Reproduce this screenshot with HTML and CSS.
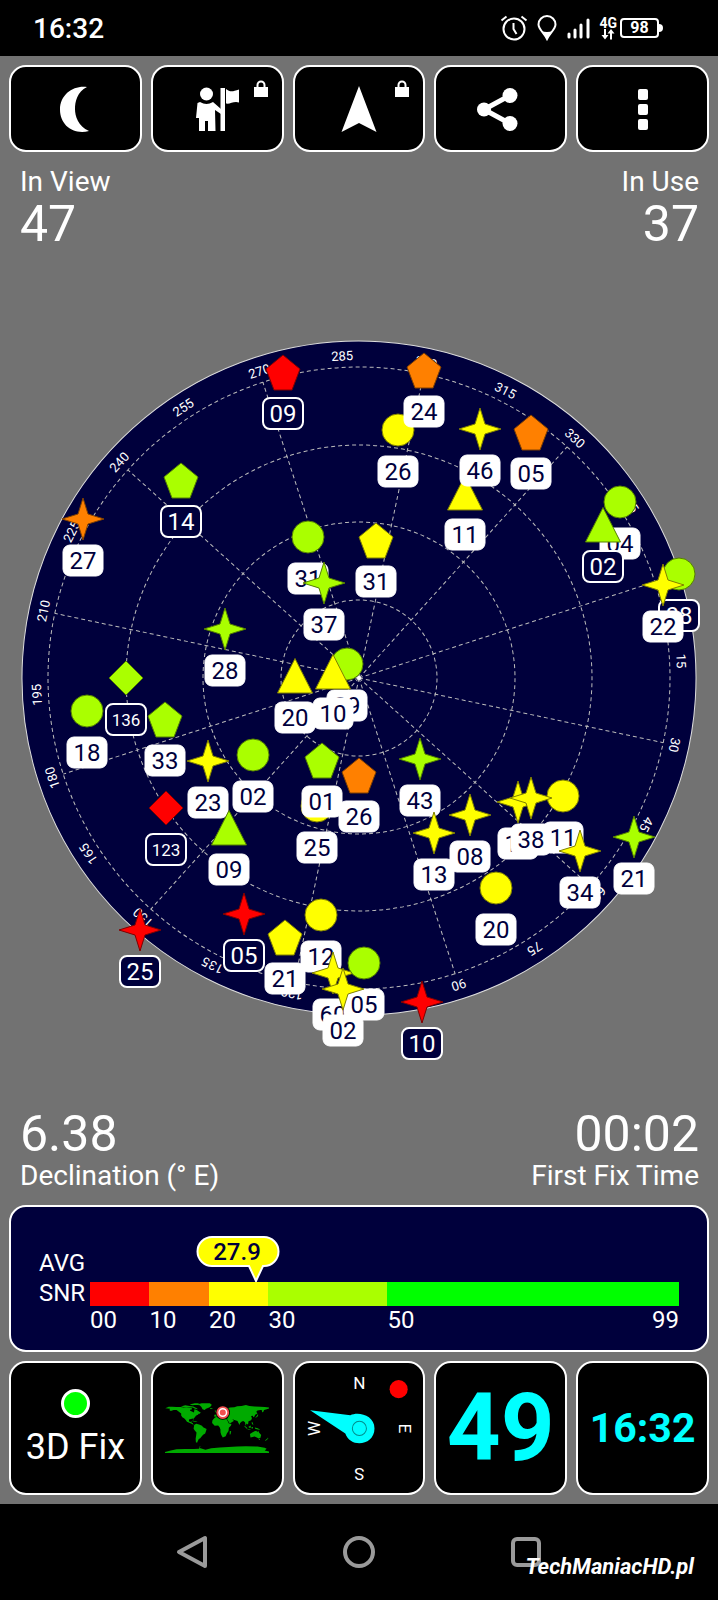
FILE: index.html
```html
<!DOCTYPE html>
<html lang="en">
<head>
  <meta charset="UTF-8" />
  <meta name="viewport" content="width=device-width, initial-scale=1.0" />
  <title>GPS Status</title>
  <link rel="stylesheet" href="styles.css">
</head>
<body>
  <header class="status-bar">
    <span class="clock">16:32</span>
    <div class="status-icons">
      <svg width="28" height="26" viewBox="0 0 28 26" class="line">
        <circle cx="14" cy="14" r="10.5"/>
        <path d="M13.5 8v6l3 5M1.5 5.5l5-4M26.5 5.5l-5-4"/>
      </svg>
      <svg width="20" height="26" viewBox="0 0 20 26">
        <path class="line" d="M10 24C7 18 1.500 14 1.500 9.500a8.500 8.500 0 0 1 17 0C18.500 14 13 18 10 24z"/>
        <path class="solid" d="M4 15.500q6 3 12 0L10 24.500z"/>
      </svg>
      <svg width="24" height="22" viewBox="0 0 24 22" class="signal">
        <path d="M3 17v3M9 13v7M15 8v12M22 3v17"/>
      </svg>
      <div class="network">
        <span>4G</span>
        <svg width="14" height="11" viewBox="0 0 14 11">
          <path class="solid" d="M3 0h2v6h2.500L4 10.500.5 6H3zM9 10.500h2v-6h2.500L10 0 6.500 4.500H9z"/>
        </svg>
      </div>
      <div class="battery">98</div>
    </div>
  </header>

  <main class="app">
    <div class="toolbar">
      <button class="tile" aria-label="Night mode">
        <svg width="48" height="48" viewBox="0 0 48 48" class="solid">
          <path d="M36 2C26 7 24 17 24 24s3 17 14 22C22 50 9 40 9 24.500S23 0 36 2z"/>
        </svg>
      </button>
      <button class="tile" aria-label="Waypoints">
        <svg width="48" height="48" viewBox="0 0 48 48" class="solid">
          <circle cx="13.500" cy="9" r="6.500"/>
          <path d="M7 17q6.500 4 13 0l8 7v5l-6-4 .5 21H15V36h-3v10H6V33H3l1.500-15z"/>
          <path d="M27.500 3H32v43h-4.500zM33 4c4 3 6 3 13 .5v13c-5-2-9 2-13 1z"/>
        </svg>
        <svg width="16" height="18" viewBox="0 0 16 18" class="lock">
          <path class="solid" d="M1 7h14v10H1z"/>
          <path class="line" d="M4.500 8V5a3.500 3.500 0 0 1 7 0v3"/>
        </svg>
      </button>
      <button class="tile" aria-label="Navigate">
        <svg width="48" height="48" viewBox="0 0 48 48" class="solid">
          <path d="M24 1l17.500 46L24 38 6.500 47z"/>
        </svg>
        <svg width="16" height="18" viewBox="0 0 16 18" class="lock">
          <path class="solid" d="M1 7h14v10H1z"/>
          <path class="line" d="M4.500 8V5a3.500 3.500 0 0 1 7 0v3"/>
        </svg>
      </button>
      <button class="tile" aria-label="Share">
        <svg width="48" height="48" viewBox="0 0 48 48" class="solid">
          <path class="share-line" d="M33 10.500L7 24.500l26 14"/>
          <circle cx="7" cy="24.500" r="7"/>
          <circle cx="33" cy="10.500" r="7.500"/>
          <circle cx="33" cy="38.500" r="7.500"/>
        </svg>
      </button>
      <button class="tile" aria-label="More">
        <svg width="48" height="48" viewBox="0 0 48 48" class="solid">
          <rect x="19" y="4" width="10" height="11" rx="2"/>
          <rect x="19" y="19" width="10" height="11" rx="2"/>
          <rect x="19" y="34" width="10" height="11" rx="2"/>
        </svg>
      </button>
    </div>

    <div class="readouts top">
      <div class="readout"><span class="label">In View</span><span class="value">47</span></div>
      <div class="readout right"><span class="label">In Use</span><span class="value">37</span></div>
    </div>

    <svg class="radar" viewBox="0 250 718 857">
      <defs>
        <circle id="circle" r="16"/>
        <path id="pentagon" d="M0-17L17-3 9 18H-9L-17-3z"/>
        <path id="star" d="M0-21L5-5 21 0 5 5 0 21-5 5-21 0-5-5z"/>
        <path id="triangle" d="M0-17.500L17.500 17h-35z"/>
        <path id="diamond" d="M0-17L17 0 0 17-17 0z"/>
        <rect id="tag" x="-20" y="26" width="40" height="31" rx="7"/>
      </defs>

      <!-- sky plot, rotated to the current heading -->
      <g transform="translate(359 678) rotate(72)">
        <circle class="sky" r="337"/>
        <g class="grid">
          <circle r="78"/>
          <circle r="156"/>
          <circle r="233"/>
          <circle r="311"/>
          <path d="M0 0V-311"/>
          <path d="M0 0V-311" transform="rotate(30)"/>
          <path d="M0 0V-311" transform="rotate(60)"/>
          <path d="M0 0V-311" transform="rotate(90)"/>
          <path d="M0 0V-311" transform="rotate(120)"/>
          <path d="M0 0V-311" transform="rotate(150)"/>
          <path d="M0 0V-311" transform="rotate(180)"/>
          <path d="M0 0V-311" transform="rotate(210)"/>
          <path d="M0 0V-311" transform="rotate(240)"/>
          <path d="M0 0V-311" transform="rotate(270)"/>
          <path d="M0 0V-311" transform="rotate(300)"/>
          <path d="M0 0V-311" transform="rotate(330)"/>
        </g>
        <g class="degrees">
          <text y="-318">0</text>
          <text y="-318" transform="rotate(15)">15</text>
          <text y="-318" transform="rotate(30)">30</text>
          <text y="-318" transform="rotate(45)">45</text>
          <text y="-318" transform="rotate(60)">60</text>
          <text y="-318" transform="rotate(75)">75</text>
          <text y="-318" transform="rotate(90)">90</text>
          <text y="-318" transform="rotate(120)">120</text>
          <text y="-318" transform="rotate(135)">135</text>
          <text y="-318" transform="rotate(150)">150</text>
          <text y="-318" transform="rotate(165)">165</text>
          <text y="-318" transform="rotate(180)">180</text>
          <text y="-318" transform="rotate(195)">195</text>
          <text y="-318" transform="rotate(210)">210</text>
          <text y="-318" transform="rotate(225)">225</text>
          <text y="-318" transform="rotate(240)">240</text>
          <text y="-318" transform="rotate(255)">255</text>
          <text y="-318" transform="rotate(270)">270</text>
          <text y="-318" transform="rotate(285)">285</text>
          <text y="-318" transform="rotate(300)">300</text>
          <text y="-318" transform="rotate(315)">315</text>
          <text y="-318" transform="rotate(330)">330</text>
          <text y="-318" transform="rotate(345)">345</text>
        </g>
        <circle class="zenith" r="2"/>
      </g>

      <!-- satellites; "unused" ones get an outlined tag -->
      <g class="sat" transform="translate(398 430)"><use href="#circle" class="fair"/><use href="#tag"/><text y="50">26</text></g>
      <g class="sat" transform="translate(308 537)"><use href="#circle" class="good"/><use href="#tag"/><text y="50">31</text></g>
      <g class="sat" transform="translate(620 502)"><use href="#circle" class="good"/><use href="#tag"/><text y="50">04</text></g>
      <g class="sat unused" transform="translate(679 574)"><use href="#circle" class="good"/><use href="#tag"/><text y="50">08</text></g>
      <g class="sat" transform="translate(347 664)"><use href="#circle" class="good"/><use href="#tag"/><text y="50">29</text></g>
      <g class="sat" transform="translate(87 711)"><use href="#circle" class="good"/><use href="#tag"/><text y="50">18</text></g>
      <g class="sat" transform="translate(253 755)"><use href="#circle" class="good"/><use href="#tag"/><text y="50">02</text></g>
      <g class="sat" transform="translate(317 806)"><use href="#circle" class="fair"/><use href="#tag"/><text y="50">25</text></g>
      <g class="sat" transform="translate(321 915)"><use href="#circle" class="fair"/><use href="#tag"/><text y="50">12</text></g>
      <g class="sat" transform="translate(496 888)"><use href="#circle" class="fair"/><use href="#tag"/><text y="50">20</text></g>
      <g class="sat" transform="translate(563 796)"><use href="#circle" class="fair"/><use href="#tag"/><text y="50">11</text></g>

      <g class="sat" transform="translate(465 493)"><use href="#triangle" class="fair"/><use href="#tag"/><text y="50">11</text></g>
      <g class="sat unused" transform="translate(603 525)"><use href="#triangle" class="good"/><use href="#tag"/><text y="50">02</text></g>
      <g class="sat" transform="translate(295 676)"><use href="#triangle" class="fair"/><use href="#tag"/><text y="50">20</text></g>
      <g class="sat" transform="translate(333 672)"><use href="#triangle" class="fair"/><use href="#tag"/><text y="50">10</text></g>

      <g class="sat unused" transform="translate(283 372)"><use href="#pentagon" class="bad"/><use href="#tag"/><text y="50">09</text></g>
      <g class="sat" transform="translate(424 370)"><use href="#pentagon" class="weak"/><use href="#tag"/><text y="50">24</text></g>
      <g class="sat" transform="translate(531 432)"><use href="#pentagon" class="weak"/><use href="#tag"/><text y="50">05</text></g>
      <g class="sat unused" transform="translate(181 480)"><use href="#pentagon" class="good"/><use href="#tag"/><text y="50">14</text></g>
      <g class="sat" transform="translate(376 540)"><use href="#pentagon" class="fair"/><use href="#tag"/><text y="50">31</text></g>
      <g class="sat" transform="translate(165 719)"><use href="#pentagon" class="good"/><use href="#tag"/><text y="50">33</text></g>
      <g class="sat" transform="translate(322 760)"><use href="#pentagon" class="good"/><use href="#tag"/><text y="50">01</text></g>
      <g class="sat" transform="translate(359 775)"><use href="#pentagon" class="weak"/><use href="#tag"/><text y="50">26</text></g>
      <g class="sat" transform="translate(285 937)"><use href="#pentagon" class="fair"/><use href="#tag"/><text y="50">21</text></g>

      <g class="sat unused long" transform="translate(126 678)"><use href="#diamond" class="good"/><use href="#tag"/><text y="48">136</text></g>
      <g class="sat unused long" transform="translate(166 808)"><use href="#diamond" class="bad"/><use href="#tag"/><text y="48">123</text></g>

      <g class="sat" transform="translate(83 519)"><use href="#star" class="weak"/><use href="#tag"/><text y="50">27</text></g>
      <g class="sat" transform="translate(480 429)"><use href="#star" class="fair"/><use href="#tag"/><text y="50">46</text></g>
      <g class="sat" transform="translate(324 583)"><use href="#star" class="good"/><use href="#tag"/><text y="50">37</text></g>
      <g class="sat" transform="translate(225 629)"><use href="#star" class="good"/><use href="#tag"/><text y="50">28</text></g>
      <g class="sat" transform="translate(663 585)"><use href="#star" class="fair"/><use href="#tag"/><text y="50">22</text></g>
      <g class="sat" transform="translate(208 761)"><use href="#star" class="fair"/><use href="#tag"/><text y="50">23</text></g>
      <g class="sat" transform="translate(229 828)"><use href="#triangle" class="good"/><use href="#tag"/><text y="50">09</text></g>
      <g class="sat" transform="translate(420 759)"><use href="#star" class="good"/><use href="#tag"/><text y="50">43</text></g>
      <g class="sat" transform="translate(434 833)"><use href="#star" class="fair"/><use href="#tag"/><text y="50">13</text></g>
      <g class="sat" transform="translate(470 815)"><use href="#star" class="fair"/><use href="#tag"/><text y="50">08</text></g>
      <g class="sat" transform="translate(518 802)"><use href="#star" class="fair"/><use href="#tag"/><text y="50">12</text></g>
      <g class="sat" transform="translate(531 798)"><use href="#star" class="fair"/><use href="#tag"/><text y="50">38</text></g>
      <g class="sat" transform="translate(580 851)"><use href="#star" class="fair"/><use href="#tag"/><text y="50">34</text></g>
      <g class="sat" transform="translate(634 837)"><use href="#star" class="good"/><use href="#tag"/><text y="50">21</text></g>
      <g class="sat unused" transform="translate(140 930)"><use href="#star" class="bad"/><use href="#tag"/><text y="50">25</text></g>
      <g class="sat unused" transform="translate(244 914)"><use href="#star" class="bad"/><use href="#tag"/><text y="50">05</text></g>
      <g class="sat unused" transform="translate(422 1002)"><use href="#star" class="bad"/><use href="#tag"/><text y="50">10</text></g>
      <g class="sat" transform="translate(333 973)"><use href="#star" class="fair"/><use href="#tag"/><text y="50">60</text></g>
      <g class="sat" transform="translate(364 963)"><use href="#circle" class="good"/><use href="#tag"/><text y="50">05</text></g>
      <g class="sat" transform="translate(343 989)"><use href="#star" class="fair"/><use href="#tag"/><text y="50">02</text></g>
    </svg>

    <div class="readouts bottom">
      <div class="readout"><span class="value">6.38</span><span class="label">Declination (° E)</span></div>
      <div class="readout right"><span class="value">00:02</span><span class="label">First Fix Time</span></div>
    </div>

    <section class="snr">
      <div class="snr-label">AVG<br>SNR</div>
      <div class="snr-meter">
        <div class="snr-bar">
          <span class="bad"></span><span class="weak"></span><span class="fair"></span><span class="good"></span><span class="best"></span>
          <svg class="bubble" style="left: 28.2%" width="84" height="48" viewBox="0 0 84 48">
            <path d="M16 3h52a14 14 0 0 1 0 29H67L60 47 53 32H16a14 14 0 0 1 0-29z"/>
            <text x="41" y="26">27.9</text>
          </svg>
        </div>
        <div class="snr-scale">
          <span>00</span><span>10</span><span>20</span><span>30</span><span class="last"><span>50</span><span>99</span></span>
        </div>
      </div>
    </section>

    <div class="widgets">
      <button class="tile fix">
        <span class="fix-dot"></span>
        3D Fix
      </button>
      <button class="tile" aria-label="World map">
        <svg class="map" viewBox="-180 -84 360 174">
          <path d="M-179-66L-167-71-155-71-141-70-127-70-115-68-105-69-93-67-88-67-86-62-93-61-93-57-85-54-80-51-79-56-78-62-72-61-66-57-60-53-56-51-60-47-66-46-64-44-70-42-74-39-76-35-81-31-81-25-84-30-90-29-97-27-97-21-92-18-88-21-88-16-83-14-83-10-78-8-80-7-86-11-92-14-104-19-109-26-114-31-120-35-124-41-124-48-132-54-140-60-150-60-160-56-165-60-162-64z"/>
          <path d="M-125-72L-110-76-95-74-82-72-70-66-66-62-76-64-84-68-95-68-112-69zM-95-79l18-4 16 0-9 5-15 2zM-73-78L-53-83-25-83-18-78-22-72-27-68-38-64-43-60-50-62-54-70-60-76z"/>
          <path d="M-24-66h8v3h-8zM-85-23l10 2 8 2-6 1-12-3z"/>
          <path d="M-79-8L-72-12-62-10-52-5-48 0-36 6-38 13-41 22-48 26-54 33-58 38-63 41-66 47-69 54-73 52-74 40-72 28-71 18-77 11-81 5z"/>
          <path d="M-17-15L-16-23-9-32-2-36 10-37 12-33 20-31 31-31 35-25 41-13 50-11 48-5 41 2 40 13 34 22 30 31 20 35 15 27 12 17 12 8 9 0 4-6-8-5z"/>
          <path d="M44 14l5-1-2 11-3 1z"/>
          <path d="M-10-37L-9-43-1-44 2-49 8-54 12-54 20-55 28-59 22-60 20-63 15-56 11-58 5-60 12-65 20-70 28-71 40-67 45-68 60-69 70-73 85-74 100-77 112-74 130-72 150-71 165-70 180-68 180-65 172-62 163-60 160-53 156-52 156-59 150-60 140-58 136-54 140-48 132-43 129-36 126-35 124-40 118-39 121-31 118-24 109-21 108-12 104-10 100-14 101-4 98-10 97-17 91-22 86-20 80-15 78-8 73-17 71-22 60-25 50-30 56-26 58-22 44-13 35-28 36-36 27-37 23-38 18-41 13-45 16-39 10-44 3-43 0-38-5-36z"/>
          <path d="M-8-58l7 0 2 6-7 1zM140-44l3 1-3 7-8 4 6-8zM120-18l3 1 3 9-5-3zM96-5l10 8-3 2-8-8zM106 6h10v2h-10zM109-2l8-4 0 8-6 0zM120-1l5 0-2 6-4-2zM131 1l10 2 9 6-9-1-9-3z"/>
          <path d="M114 23L122 18 130 14 136 12 140 17 142 11 146 19 153 27 150 37 144 39 138 35 130 32 116 35zM145 41h3v3h-3zM166 46l8-7 3 1-8 7zM175 36l3 1-2 3z"/>
          <path d="M-180 86L-160 80-140 76-110 75-80 75-62 74-60 67-57 64-60 72-40 78-20 73 10 70 40 68 70 67 100 66 140 67 165 71 172 74 165 80 180 84V90h-360z"/>
          <circle class="pin-edge" cx="20" cy="-51" r="25"/>
          <circle class="pin" cx="20" cy="-51" r="22"/>
          <circle class="pin-ring" cx="20" cy="-51" r="13"/>
        </svg>
      </button>
      <button class="tile" aria-label="Compass">
        <svg class="compass" viewBox="0 0 128 128">
          <g transform="translate(64 64)">
            <text y="-39">N</text>
            <text y="-39" transform="rotate(90)">E</text>
            <text y="-39" transform="rotate(180)">S</text>
            <text y="-39" transform="rotate(-90)">W</text>
            <circle class="sun" cx="39" cy="-39" r="9"/>
            <path class="needle" d="M-49-18L-9-13C-1-17 15-13 15 0 15 17-9 20-14 5z"/>
            <circle class="hub" r="7"/>
          </g>
        </svg>
      </button>
      <button class="tile speed">49</button>
      <button class="tile time">16:32</button>
    </div>
  </main>

  <nav class="nav-bar">
    <button aria-label="Back">
      <svg width="34" height="34" viewBox="0 0 34 34"><path d="M4 17L30 3v28z"/></svg>
    </button>
    <button aria-label="Home">
      <svg width="34" height="34" viewBox="0 0 34 34"><circle cx="17" cy="17" r="14"/></svg>
    </button>
    <button aria-label="Recent apps">
      <svg width="34" height="34" viewBox="0 0 34 34"><rect x="4" y="4" width="26" height="26" rx="4"/></svg>
    </button>
    <span class="watermark">TechManiacHD.pl</span>
  </nav>
</body>
</html>
```

FILE: styles.css
```css
:root {
  --navy: #00003c;
  --bad: #ff0000;
  --weak: #ff8000;
  --fair: #ffff00;
  --good: #aaff00;
  --best: #00ff00;
  --cyan: #00ffff;
  --gap: 9px;
}

* {
  margin: 0;
  padding: 0;
  box-sizing: border-box;
}

body {
  display: flex;
  flex-direction: column;
  min-height: 100vh;
  font-family: Roboto, "Liberation Sans", sans-serif;
  background: #000;
  color: #fff;
}

button {
  font-family: inherit;
  color: inherit;
  border: none;
  background: none;
  cursor: pointer;
}

svg {
  display: block;
}

.solid {
  fill: #fff;
}

.line {
  fill: none;
  stroke: #fff;
  stroke-width: 2;
}

/* Status bar */
.status-bar {
  display: flex;
  justify-content: space-between;
  align-items: center;
  height: 56px;
  padding: 0 54px 0 33px;
}

.clock {
  font-size: 28px;
  font-weight: 500;
}

.status-icons {
  display: flex;
  align-items: center;
  gap: 9px;
}

.signal {
  fill: none;
  stroke: #fff;
  stroke-width: 3;
  stroke-linecap: round;
}

.network {
  display: flex;
  flex-direction: column;
  align-items: center;
  font-size: 14px;
  line-height: 12px;
  font-weight: 700;
}

.battery {
  position: relative;
  width: 39px;
  margin: 0 5px 0 -6px;
  border: 2px solid #fff;
  border-radius: 4px;
  font-size: 16px;
  line-height: 16px;
  font-weight: 700;
  text-align: center;
}

.battery::after {
  content: "";
  position: absolute;
  left: 100%;
  top: 4px;
  margin-left: 2px;
  width: 4px;
  height: 8px;
  border-radius: 0 4px 4px 0;
  background: #fff;
}

/* App */
.app {
  flex: 1;
  display: flex;
  flex-direction: column;
  padding: var(--gap) 0;
  background: #727272;
}

.toolbar,
.widgets {
  display: grid;
  grid-template-columns: repeat(5, 1fr);
  gap: var(--gap);
  padding: 0 var(--gap);
}

.tile {
  position: relative;
  display: flex;
  flex-direction: column;
  align-items: center;
  justify-content: center;
  background: #000;
  border: 2px solid #fff;
  border-radius: 17px;
}

.toolbar .tile {
  height: 87px;
}

.lock {
  position: absolute;
  top: 13px;
  right: 13px;
}

.share-line {
  fill: none;
  stroke: #fff;
  stroke-width: 5;
}

.readouts {
  display: flex;
  justify-content: space-between;
}

.readouts.top {
  padding: 14px 19px 0 20px;
}

.readouts.bottom {
  padding: 1px 19px 13px 20px;
}

.readout {
  display: flex;
  flex-direction: column;
}

.readout.right {
  text-align: right;
}

.label {
  font-size: 28px;
  line-height: 32px;
}

.value {
  font-size: 50px;
  line-height: 52px;
}

/* Radar */
.radar {
  width: 100%;
}

.sky {
  fill: var(--navy);
  stroke: #ddd;
  stroke-width: 1;
}

.grid {
  fill: none;
  stroke: #bbb;
  stroke-width: 1;
  stroke-dasharray: 4 3;
}

.zenith {
  fill: #fff;
}

.degrees {
  fill: #fff;
  font-size: 13px;
  text-anchor: middle;
}

.sat {
  stroke: #fff;
  stroke-width: 1;
  fill: #fff;
}

.sat text {
  fill: var(--navy);
  stroke: none;
  font-size: 24px;
  text-anchor: middle;
}

.sat.unused {
  fill: var(--navy);
  stroke-width: 2;
}

.sat.unused text {
  fill: #fff;
}

.sat.long text {
  font-size: 17px;
}

.sat .bad { fill: var(--bad); stroke: #800000; stroke-width: 1; }
.sat .weak { fill: var(--weak); stroke: #804000; stroke-width: 1; }
.sat .fair { fill: var(--fair); stroke: #808000; stroke-width: 1; }
.sat .good { fill: var(--good); stroke: #558000; stroke-width: 1; }

/* Average SNR */
.snr {
  display: flex;
  margin: 0 var(--gap) var(--gap);
  padding: 41px 28px 16px;
  background: var(--navy);
  border: 2px solid #fff;
  border-radius: 17px;
}

.snr-label {
  flex: 0 0 51px;
  font-size: 24px;
  line-height: 30px;
}

.snr-meter {
  flex: 1;
  margin-top: 34px;
}

.snr-bar,
.snr-scale {
  display: grid;
  grid-template-columns: 10fr 10fr 10fr 20fr 49fr;
}

.snr-bar {
  position: relative;
  height: 24px;
}

.snr-bar .bad { background: var(--bad); }
.snr-bar .weak { background: var(--weak); }
.snr-bar .fair { background: var(--fair); }
.snr-bar .good { background: var(--good); }
.snr-bar .best { background: var(--best); }

.bubble {
  position: absolute;
  bottom: 100%;
  margin-left: -60px;
}

.bubble path {
  fill: var(--fair);
  stroke: #fff;
  stroke-width: 2;
}

.bubble text {
  fill: var(--navy);
  font-size: 24px;
  font-weight: 500;
  text-anchor: middle;
}

.snr-scale {
  font-size: 24px;
  line-height: 28px;
}

.snr-scale .last {
  display: flex;
  justify-content: space-between;
}

/* Widgets */
.widgets .tile {
  height: 134px;
}

.fix {
  gap: 8px;
  font-size: 36px;
}

.fix-dot {
  width: 29px;
  height: 29px;
  border: 3px solid #fff;
  border-radius: 50%;
  background: var(--best);
}

.map {
  width: 104px;
  fill: #00aa00;
}

.pin-edge {
  fill: #000;
}

.pin {
  fill: #f05050;
}

.pin-ring {
  fill: none;
  stroke: #fff;
  stroke-width: 5;
}

.compass {
  width: 100%;
}

.compass text {
  fill: #fff;
  font-size: 17px;
  text-anchor: middle;
}

.sun {
  fill: #ff0000;
}

.needle {
  fill: var(--cyan);
}

.hub {
  fill: none;
  stroke: #008c8c;
  stroke-width: 1;
}

.speed,
.time {
  color: var(--cyan);
  font-weight: 700;
}

.speed {
  font-size: 94px;
}

.time {
  font-size: 41px;
}

/* Navigation bar */
.nav-bar {
  position: relative;
  display: flex;
  justify-content: center;
  align-items: center;
  gap: 133px;
  height: 96px;
}

.nav-bar svg {
  fill: none;
  stroke: #9a9a9a;
  stroke-width: 4;
  stroke-linejoin: round;
}

.watermark {
  position: absolute;
  right: 24px;
  bottom: 19px;
  font-size: 22px;
  line-height: 28px;
  font-weight: 700;
  font-style: italic;
}
```
